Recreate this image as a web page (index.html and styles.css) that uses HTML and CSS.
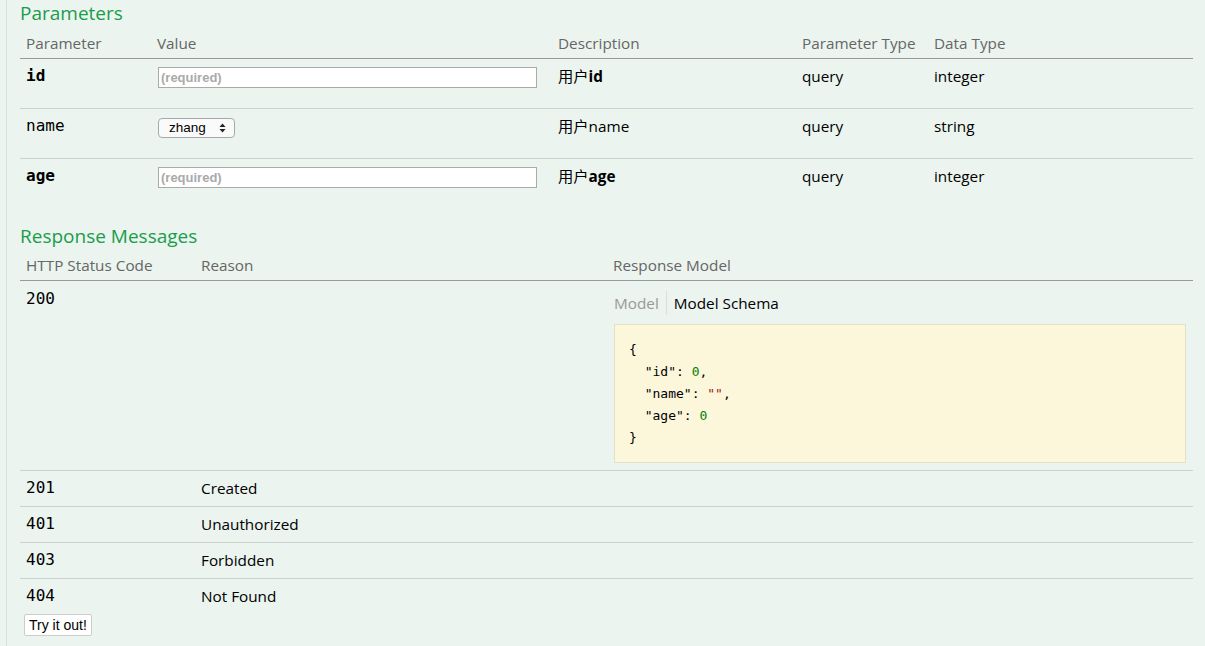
FILE: index.html
```html
<!DOCTYPE html>
<html>
<head>
<meta charset="utf-8">
<link rel="stylesheet" href="styles.css">
</head>
<body>
<div class="content">
  <h4 class="section-title">Parameters</h4>
  <table class="params">
    <colgroup>
      <col class="c-name"><col class="c-value"><col class="c-desc"><col class="c-ptype"><col class="c-dtype">
    </colgroup>
    <thead>
      <tr><th>Parameter</th><th>Value</th><th>Description</th><th>Parameter Type</th><th>Data Type</th></tr>
    </thead>
    <tbody>
      <tr>
        <td class="code required">id</td>
        <td><input class="text-input" type="text" placeholder="(required)"></td>
        <td class="desc">用户<strong>id</strong></td>
        <td>query</td>
        <td>integer</td>
      </tr>
      <tr>
        <td class="code">name</td>
        <td><span class="select">zhang<svg class="arrows" width="7" height="10" viewBox="0 0 7 10"><path d="M3.5 0.5 L6.5 4 L0.5 4 Z M3.5 9.5 L6.5 6 L0.5 6 Z" fill="#222"/></svg></span></td>
        <td class="desc">用户name</td>
        <td>query</td>
        <td>string</td>
      </tr>
      <tr>
        <td class="code required">age</td>
        <td><input class="text-input" type="text" placeholder="(required)"></td>
        <td class="desc">用户<strong>age</strong></td>
        <td>query</td>
        <td>integer</td>
      </tr>
    </tbody>
  </table>

  <h4 class="section-title second">Response Messages</h4>
  <table class="responses">
    <colgroup>
      <col class="c-code"><col class="c-reason"><col class="c-model">
    </colgroup>
    <thead>
      <tr><th>HTTP Status Code</th><th>Reason</th><th>Response Model</th></tr>
    </thead>
    <tbody>
      <tr class="first">
        <td class="code">200</td>
        <td></td>
        <td class="model-cell">
          <div class="tabs"><span class="tab inactive">Model</span><span class="tab active">Model Schema</span></div>
          <pre class="schema">{
  <span class="k">"id"</span>: <span class="n">0</span>,
  <span class="k">"name"</span>: <span class="s">""</span>,
  <span class="k">"age"</span>: <span class="n">0</span>
}</pre>
        </td>
      </tr>
      <tr><td class="code">201</td><td>Created</td><td></td></tr>
      <tr><td class="code">401</td><td>Unauthorized</td><td></td></tr>
      <tr><td class="code">403</td><td>Forbidden</td><td></td></tr>
      <tr class="last"><td class="code">404</td><td>Not Found</td><td></td></tr>
    </tbody>
  </table>
  <button class="try">Try it out!</button>
</div>
</body>
</html>
```

FILE: styles.css
```css
html, body {
  margin: 0;
  padding: 0;
  background: #ebf4ef;
}
body {
  font-family: "Open Sans", "Noto Sans CJK SC", sans-serif;
  color: #000;
}
.content {
  margin-left: 6px;
  border-left: 1px solid #d6e3da;
  background: #ebf4ef;
  padding: 0 12px 0 13px;
  height: 646px;
  box-sizing: border-box;
}
.section-title {
  margin: 0;
  padding-top: 1px;
  font-size: 19px;
  line-height: 24px;
  font-weight: 400;
  color: #1a9c4c;
}
.section-title.second {
  margin-top: 15px;
}
table {
  width: 1173px;
  border-collapse: collapse;
  table-layout: fixed;
}
th {
  text-align: left;
  font-weight: 400;
  color: #666;
  font-size: 15.3px;
  line-height: 20px;
  padding: 8px 6px 5px;
  border-bottom: 1px solid #999;
}
.responses th { padding: 7px 6px 5px; }
td {
  vertical-align: top;
  font-size: 15.3px;
  line-height: 20px;
  padding: 7px 6px 0;
}
.params td { height: 42px; border-bottom: 1px solid #ccd3cf; }
.params tbody tr:last-child td { border-bottom: none; }
.c-name { width: 131px; }
.c-value { width: 401px; }
.c-desc { width: 244px; }
.c-ptype { width: 132px; }
.c-dtype { width: 265px; }
.c-code { width: 175px; }
.c-reason { width: 412px; }
.c-model { width: 586px; }
td.code {
  font-family: "DejaVu Sans Mono", monospace;
  font-size: 16px;
}
.required { font-weight: 700; }
.desc strong { font-weight: 700; }
.text-input {
  display: block;
  box-sizing: border-box;
  width: 379px;
  height: 21px;
  margin: 1px 0 0 1px;
  padding: 0 2px;
  border: 1px solid #aaa;
  background: #fff;
  font-family: "Liberation Sans", sans-serif;
  font-size: 13px;
  font-weight: 700;
  outline: none;
}
.text-input::placeholder { color: #aaa; }
.select {
  display: inline-flex;
  align-items: center;
  gap: 13px;
  box-sizing: border-box;
  width: 77px;
  height: 20px;
  margin: 1px 0 0 1px;
  padding: 0 7px 0 10px;
  border: 1px solid #a8a8a8;
  border-radius: 4px;
  background: #fafafa;
  font-family: "Liberation Sans", sans-serif;
  font-size: 13.5px;
  line-height: 18px;
}
.responses td { border-bottom: 1px solid #ccd3cf; height: 28px; }
.responses tr.first td { padding-top: 8px; height: 181px; }
.responses tr.first td.model-cell { padding-top: 10px; height: 179px; }
.responses tr.last td { border-bottom: none; height: 24px; padding-bottom: 0; }
.tabs {
  display: flex;
  align-items: stretch;
  font-size: 15.3px;
  line-height: 24px;
  margin-left: 1px;
}
.tab.inactive { color: #999; padding-right: 7px; border-right: 1px solid #d9dfdb; }
.tab.active { color: #000; padding-left: 7px; }
.schema {
  margin: 9px 1px 0 1px;
  padding: 14px 14px 13px;
  background: #fcf6db;
  border: 1px solid #e5e0c6;
  font-family: "DejaVu Sans Mono", monospace;
  font-size: 13px;
  line-height: 22px;
  color: #000;
  height: 139px;
  box-sizing: border-box;
}
.schema .k { color: #000; }
.schema .n { color: #008000; }
.schema .s { color: #a31515; }
.try {
  display: block;
  margin: 4px 0 0 4px;
  height: 22px;
  padding: 0 4px;
  background: #fff;
  border: 1px solid #ccc;
  border-radius: 2px;
  font-family: "Liberation Sans", sans-serif;
  font-size: 14px;
  color: #000;
}
```
